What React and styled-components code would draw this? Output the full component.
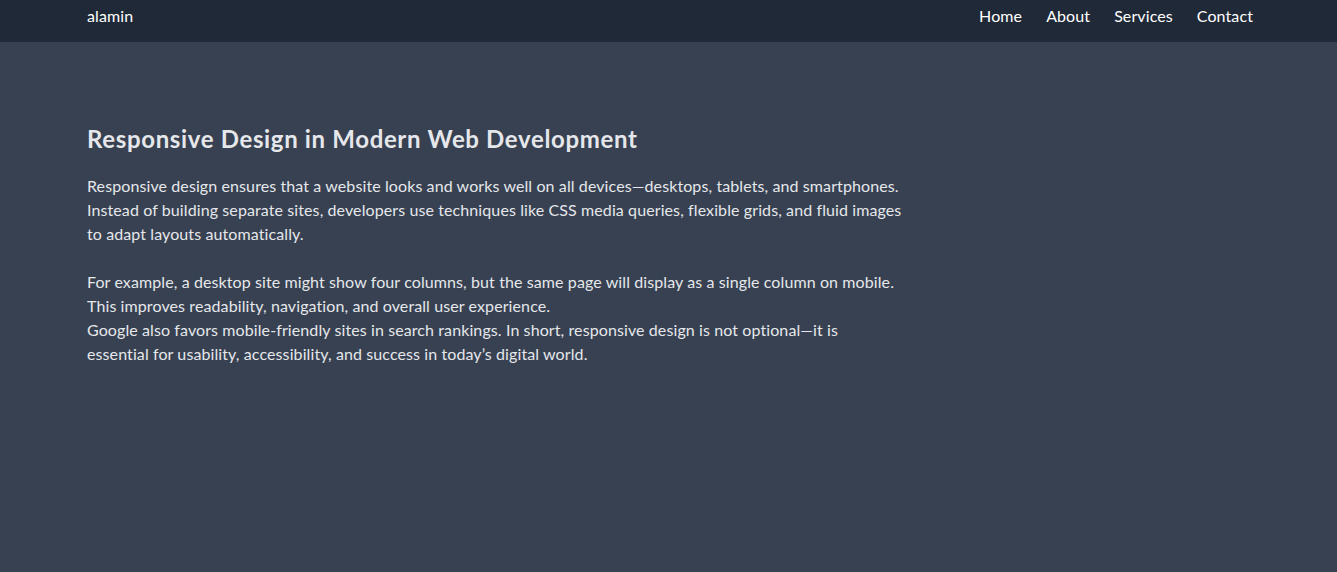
import React from "react";
import styled, { createGlobalStyle } from "styled-components";

const GlobalStyle = createGlobalStyle`
    * {
        box-sizing: border-box;
    }
    html, body {
        margin: 0;
        padding: 0;
        background-color: #374151;
        font-family: Lato, "Liberation Sans", sans-serif;
    }
`;

const links = ["Home", "About", "Services", "Contact"];

function App() {
    return (
        <Page>
            <GlobalStyle/>
            <NavBar>
                <NavInner>
                    <Brand>alamin</Brand>
                    <NavLinks>
                        {links.map((l) => (
                            <NavLink key={l} href="#">{l}</NavLink>
                        ))}
                    </NavLinks>
                </NavInner>
            </NavBar>

            <Main>
                <Title>Responsive Design in Modern Web Development</Title>
                <Text>
                    Responsive design ensures that a website looks and works well on all devices—desktops, tablets, and smartphones.<br/>
                    Instead of building separate sites, developers use techniques like CSS media queries, flexible grids, and fluid images<br/>
                    to adapt layouts automatically.
                </Text>
                <Text>
                    For example, a desktop site might show four columns, but the same page will display as a single column on mobile.<br/>
                    This improves readability, navigation, and overall user experience.<br/>
                    Google also favors mobile-friendly sites in search rankings. In short, responsive design is not optional—it is<br/>
                    essential for usability, accessibility, and success in today’s digital world.
                </Text>
            </Main>
        </Page>
    );
}

const Page = styled.div`
    min-height: 100vh;
    background-color: #374151;
`;

const NavBar = styled.nav`
    background-color: #1f2937;
    height: 42px;
`;

const NavInner = styled.div`
    height: 100%;
    display: flex;
    align-items: center;
    justify-content: space-between;
    padding: 0 84px 10px 87px;
`;

const Brand = styled.div`
    color: #ffffff;
    font-size: 16px;
    line-height: 24px;
    letter-spacing: 0.1px;
`;

const NavLinks = styled.div`
    display: flex;
    gap: 24px;
`;

const NavLink = styled.a`
    color: #ffffff;
    font-size: 16px;
    line-height: 24px;
    letter-spacing: 0.1px;
    text-decoration: none;
`;

const Main = styled.main`
    padding: 81px 84px 0 87px;
`;

const Title = styled.h1`
    margin: 0 0 19px;
    color: #e5e7eb;
    font-size: 24px;
    line-height: 32px;
    font-weight: 700;
    letter-spacing: 0.65px;
`;

const Text = styled.p`
    margin: 0 0 24px;
    color: #e5e7eb;
    font-size: 16px;
    line-height: 24px;
    letter-spacing: 0.1px;
    white-space: nowrap;
`;

export default App;
